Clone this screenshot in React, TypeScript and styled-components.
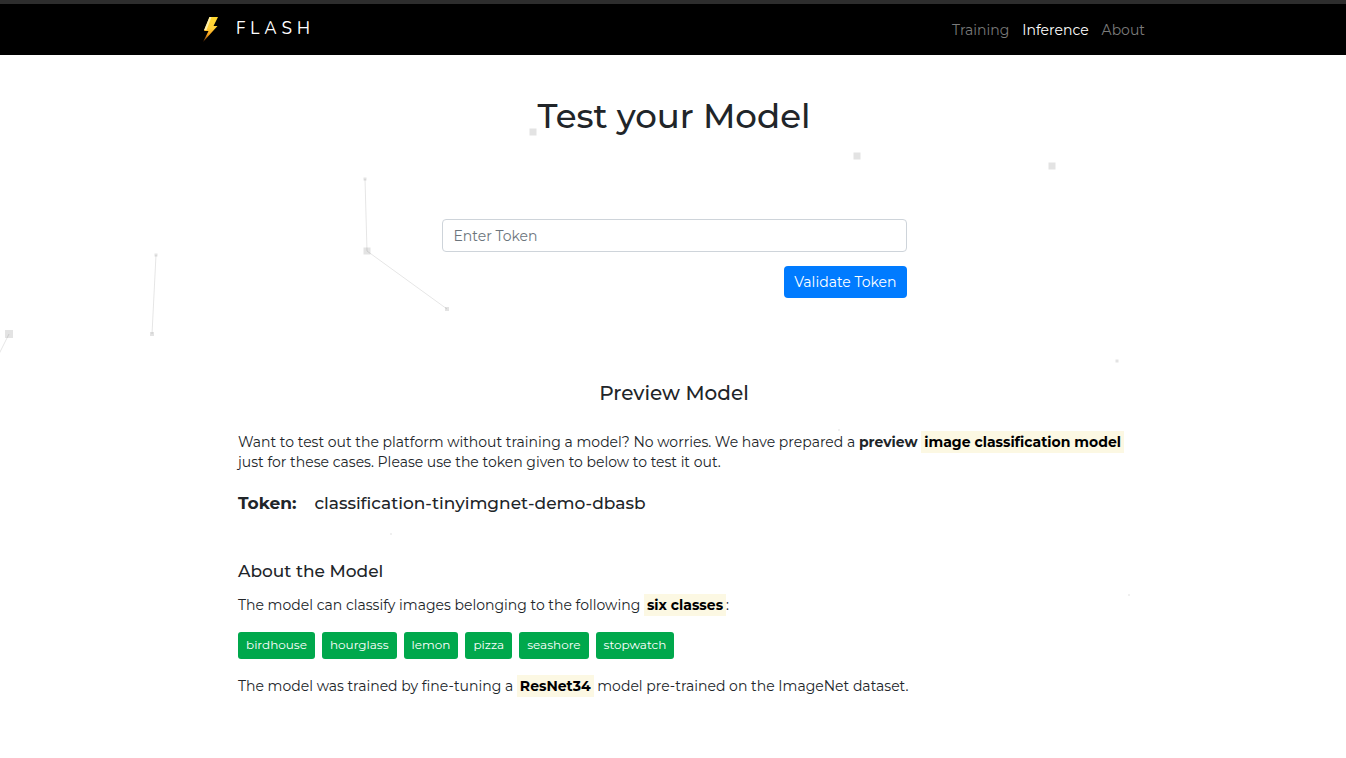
import React from "react";
import styled, { createGlobalStyle } from "styled-components";

const GlobalStyle = createGlobalStyle`
  *, *::before, *::after { box-sizing: border-box; }
  body {
    margin: 0;
    background: #fff;
    color: #212529;
    font-family: Montserrat, Inter, "Open Sans", sans-serif;
    font-size: 14px;
    line-height: 20px;
  }
  h1, h2, h3, p, ul { margin: 0; padding: 0; }
`;

const Page = styled.div`
  position: relative;
  min-height: 100vh;
`;

const Particles = styled.svg`
  position: absolute;
  top: 0;
  left: 0;
  pointer-events: none;
`;

const Header = styled.header`
  position: relative;
  background: #000;
  border-top: 4px solid #2d2d2d;
`;

const Nav = styled.nav`
  display: flex;
  align-items: center;
  justify-content: space-between;
  max-width: 944px;
  height: 51px;
  margin: 0 auto;
`;

const Brand = styled.a`
  display: flex;
  align-items: center;
  gap: 15px;
  padding-bottom: 2px;
  color: #fff;
  font-family: Nunito, Lato, sans-serif;
  font-size: 17px;
  line-height: 26px;
  letter-spacing: 5px;
  text-decoration: none;
`;

const NavLinks = styled.div`
  display: flex;
  gap: 13px;
`;

const NavLink = styled.a<{ $active?: boolean }>`
  color: ${(p) => (p.$active ? "#fff" : "#7a7a7a")};
  text-decoration: none;
`;

const Main = styled.main`
  position: relative;
  max-width: 944px;
  margin: 0 auto;
  padding: 37px 35px 40px 37px;
`;

const Title = styled.h1`
  font-size: 34px;
  font-weight: 500;
  line-height: 48px;
  text-align: center;
`;

const TokenForm = styled.form`
  display: flex;
  flex-direction: column;
  align-items: flex-end;
  gap: 14px;
  width: 465px;
  max-width: 100%;
  margin: 79px auto 0;
`;

const TokenInput = styled.input`
  width: 100%;
  height: 33px;
  padding: 0 11px;
  border: 1px solid #ced4da;
  border-radius: 4px;
  background: #fff;
  color: #495057;
  font: inherit;
  &::placeholder { color: #6c757d; opacity: 1; }
`;

const SubmitButton = styled.button`
  height: 32px;
  padding: 0 10px;
  border: 0;
  border-radius: 4px;
  background: #007bff;
  color: #fff;
  font: inherit;
`;

const SectionTitle = styled.h2`
  margin-top: 82px;
  font-size: 20px;
  font-weight: 500;
  line-height: 26px;
  text-align: center;
`;

const Intro = styled.p`
  margin: 26px -32px 0 0;
`;

const Mark = styled.mark`
  padding: 2px 3px;
  background: #fcf8e3;
  color: #000;
  font-weight: 700;
`;

const TokenLine = styled.p`
  display: flex;
  gap: 18px;
  margin-top: 20px;
  font-size: 17px;
  font-weight: 500;
  line-height: 22px;
`;

const Heading = styled.h3`
  margin-top: 46px;
  font-size: 17px;
  font-weight: 500;
  line-height: 22px;
`;

const Text = styled.p`
  margin-top: 13px;
`;

const Classes = styled.ul`
  display: flex;
  flex-wrap: wrap;
  gap: 7px;
  margin: 17px 0;
  list-style: none;
`;

const ClassTag = styled.li`
  padding: 3px 8px 4px;
  border-radius: 3px;
  background: #00a84c;
  color: #fff;
  font-size: 12px;
`;

const points = [
  [533, 132, 7], [857, 156, 7], [1052, 166, 7], [365, 179, 3],
  [367, 251, 7], [447, 309, 4], [156, 255, 3], [152, 334, 4],
  [9, 334, 8], [1117, 361, 3], [839, 430, 2], [391, 534, 2], [1129, 595, 2],
];

const links = [
  [365, 179, 367, 251], [367, 251, 447, 309], [156, 255, 152, 334], [9, 334, -9, 370],
];

const classNames = ["birdhouse", "hourglass", "lemon", "pizza", "seashore", "stopwatch"];

function Bolt() {
  return (
    <svg width="20" height="26" viewBox="0 0 20 26" aria-hidden="true">
      <defs>
        <linearGradient id="bolt" x1="0" y1="0" x2="0" y2="1">
          <stop offset="0" stopColor="#ffd82e" />
          <stop offset="0.45" stopColor="#ffd03a" />
          <stop offset="0.7" stopColor="#f9a21c" />
          <stop offset="1" stopColor="#5c2606" />
        </linearGradient>
      </defs>
      <path d="M8.5 1H17L12.5 10H16.5L2 26L7.5 15H3Z" fill="url(#bolt)" />
      <path d="M8.5 1H10.5L5.5 14H3Z" fill="#fff0a8" />
    </svg>
  );
}

export default function App() {
  return (
    <Page>
      <GlobalStyle />
      <Particles width="100%" height="100%" aria-hidden="true">
        {links.map(([x1, y1, x2, y2]) => (
          <line key={`${x1}-${x2}`} x1={x1} y1={y1} x2={x2} y2={y2} stroke="#000" strokeOpacity="0.1" />
        ))}
        {points.map(([x, y, size]) => (
          <rect key={`${x}-${y}`} x={x - size / 2} y={y - size / 2} width={size} height={size} fill="#000" fillOpacity={size > 2 ? 0.11 : 0.06} />
        ))}
      </Particles>
      <Header>
        <Nav>
          <Brand href="#"><Bolt />FLASH</Brand>
          <NavLinks>
            <NavLink href="#training">Training</NavLink>
            <NavLink href="#inference" $active>Inference</NavLink>
            <NavLink href="#about">About</NavLink>
          </NavLinks>
        </Nav>
      </Header>
      <Main>
        <Title>Test your Model</Title>
        <TokenForm onSubmit={(e) => e.preventDefault()}>
          <TokenInput type="text" aria-label="Token" placeholder="Enter Token" />
          <SubmitButton type="submit">Validate Token</SubmitButton>
        </TokenForm>
        <SectionTitle>Preview Model</SectionTitle>
        <Intro>
          Want to test out the platform without training a model? No worries. We have prepared a{" "}
          <b>preview</b> <Mark>image classification model</Mark> just for these cases. Please use the
          token given to below to test it out.
        </Intro>
        <TokenLine><b>Token:</b><span>classification-tinyimgnet-demo-dbasb</span></TokenLine>
        <Heading>About the Model</Heading>
        <Text>The model can classify images belonging to the following <Mark>six classes</Mark>:</Text>
        <Classes>
          {classNames.map((name) => <ClassTag key={name}>{name}</ClassTag>)}
        </Classes>
        <Text>The model was trained by fine-tuning a <Mark>ResNet34</Mark> model pre-trained on the ImageNet dataset.</Text>
      </Main>
    </Page>
  );
}
